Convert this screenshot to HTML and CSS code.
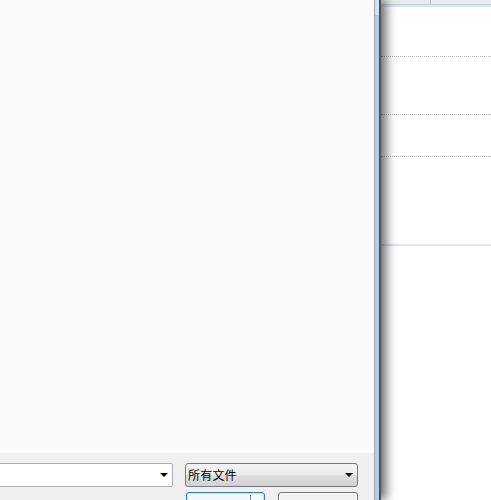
FILE: index.html
```html
<!DOCTYPE html>
<html>
<head>
<meta charset="utf-8">
<link rel="stylesheet" href="styles.css">
</head>
<body>
<div class="screen">
  <div class="dialog">
    <div class="dialog-body">
      <div class="list"></div>
      <div class="bottom">
        <div class="combo name-combo">
          <span class="combo-text"></span>
          <span class="arrow"></span>
        </div>
        <div class="right-col">
          <div class="combo type-combo">
            <span class="combo-text">所有文件</span>
            <span class="arrow"></span>
          </div>
          <div class="buttons">
            <div class="btn btn-open"><span class="split"></span></div>
            <div class="btn btn-cancel"></div>
          </div>
        </div>
      </div>
    </div>
    <div class="frame"></div>
  </div>
  <div class="backwin">
    <div class="header">
      <div class="hcell hcell-first"></div>
      <div class="hcell"></div>
    </div>
    <div class="row r1"></div>
    <div class="row r2"></div>
    <div class="row r3"></div>
    <div class="row r4"></div>
  </div>
</div>
</body>
</html>
```
FILE: styles.css
```css
* { box-sizing: border-box; }
html, body { margin: 0; padding: 0; }
body { width: 491px; height: 500px; overflow: hidden; background: #ffffff; font-family: "Noto Sans CJK SC", "Noto Sans", sans-serif; }
.screen { display: flex; width: 491px; height: 500px; }
.dialog {
  position: relative;
  z-index: 2;
  display: flex;
  width: 381px;
  height: 500px;
  flex: 0 0 381px;
  box-shadow: 5px 0 10px rgba(0,0,0,0.6);
}
.dialog-body { width: 374px; display: flex; flex-direction: column; }
.list { flex: 1; background: #fbfbfb; }
.bottom {
  height: 47px;
  flex: 0 0 47px;
  background: #f0f0f0;
  display: flex;
  gap: 12px;
  padding-top: 10px;
  overflow: hidden;
}
.combo {
  position: relative;
  height: 24px;
  border: 1px solid #a9acb3;
  border-radius: 2px;
  display: flex;
  align-items: center;
}
.name-combo { width: 183px; margin-left: -10px; background: #ffffff; border-color: #abadb3; }
.right-col { width: 173px; display: flex; flex-direction: column; gap: 5px; }
.type-combo {
  width: 173px;
  border-color: #7a7a7a;
  border-radius: 3px;
  background: linear-gradient(#f4f4f4 0%, #ececec 48%, #dedede 52%, #d2d2d2 100%);
  padding-left: 2px;
}
.combo-text { font-size: 12px; color: #000; line-height: 22px; letter-spacing: 0.2px; }
.arrow {
  position: absolute;
  right: 4px;
  top: 9px;
  width: 0; height: 0;
  border-left: 4px solid transparent;
  border-right: 4px solid transparent;
  border-top: 4px solid #000;
}
.buttons { display: flex; gap: 13px; margin-left: 1px; }
.btn { height: 24px; border-radius: 3px; position: relative; }
.btn-open {
  width: 79px;
  border: 1px solid #3c7fb1;
  box-shadow: inset 0 0 0 1px #b8e4f7;
  background: linear-gradient(#f5fbfe, #e6f4fc);
}
.split { position: absolute; left: 63px; top: 2px; width: 1px; height: 20px; background: #7d8fa0; }
.btn-cancel {
  width: 80px;
  border: 1px solid #707070;
  box-shadow: inset 0 0 0 1px #fcfcfc;
  background: linear-gradient(#f2f2f2, #ebebeb);
}
.frame {
  width: 7px;
  border-left: 1px solid #9aa4ae;
  border-right: 2px solid #505458;
  background: linear-gradient(#d2e2f1 0, #d2e2f1 15px, #b3cde8 15px, #b3cde8 100%);
}
.backwin { flex: 1; background: #ffffff; display: flex; flex-direction: column; }
.header {
  height: 5px;
  display: flex;
  background: #e6ecec;
  border-bottom: 1px solid #c6d0d4;
  margin-bottom: 1px;
  box-shadow: 0 2px 0 #d9e5ec;
}
.hcell-first { width: 50px; border-right: 1px solid #b8c0c4; }
.row { border-bottom: 1px dotted #b4b4b4; }
.r1 { height: 50px; margin-top: 1px; }
.r2 { height: 58px; }
.r3 { height: 42px; }
.r4 { height: 89px; border-bottom: 2px solid #dbe5ec; }
```
